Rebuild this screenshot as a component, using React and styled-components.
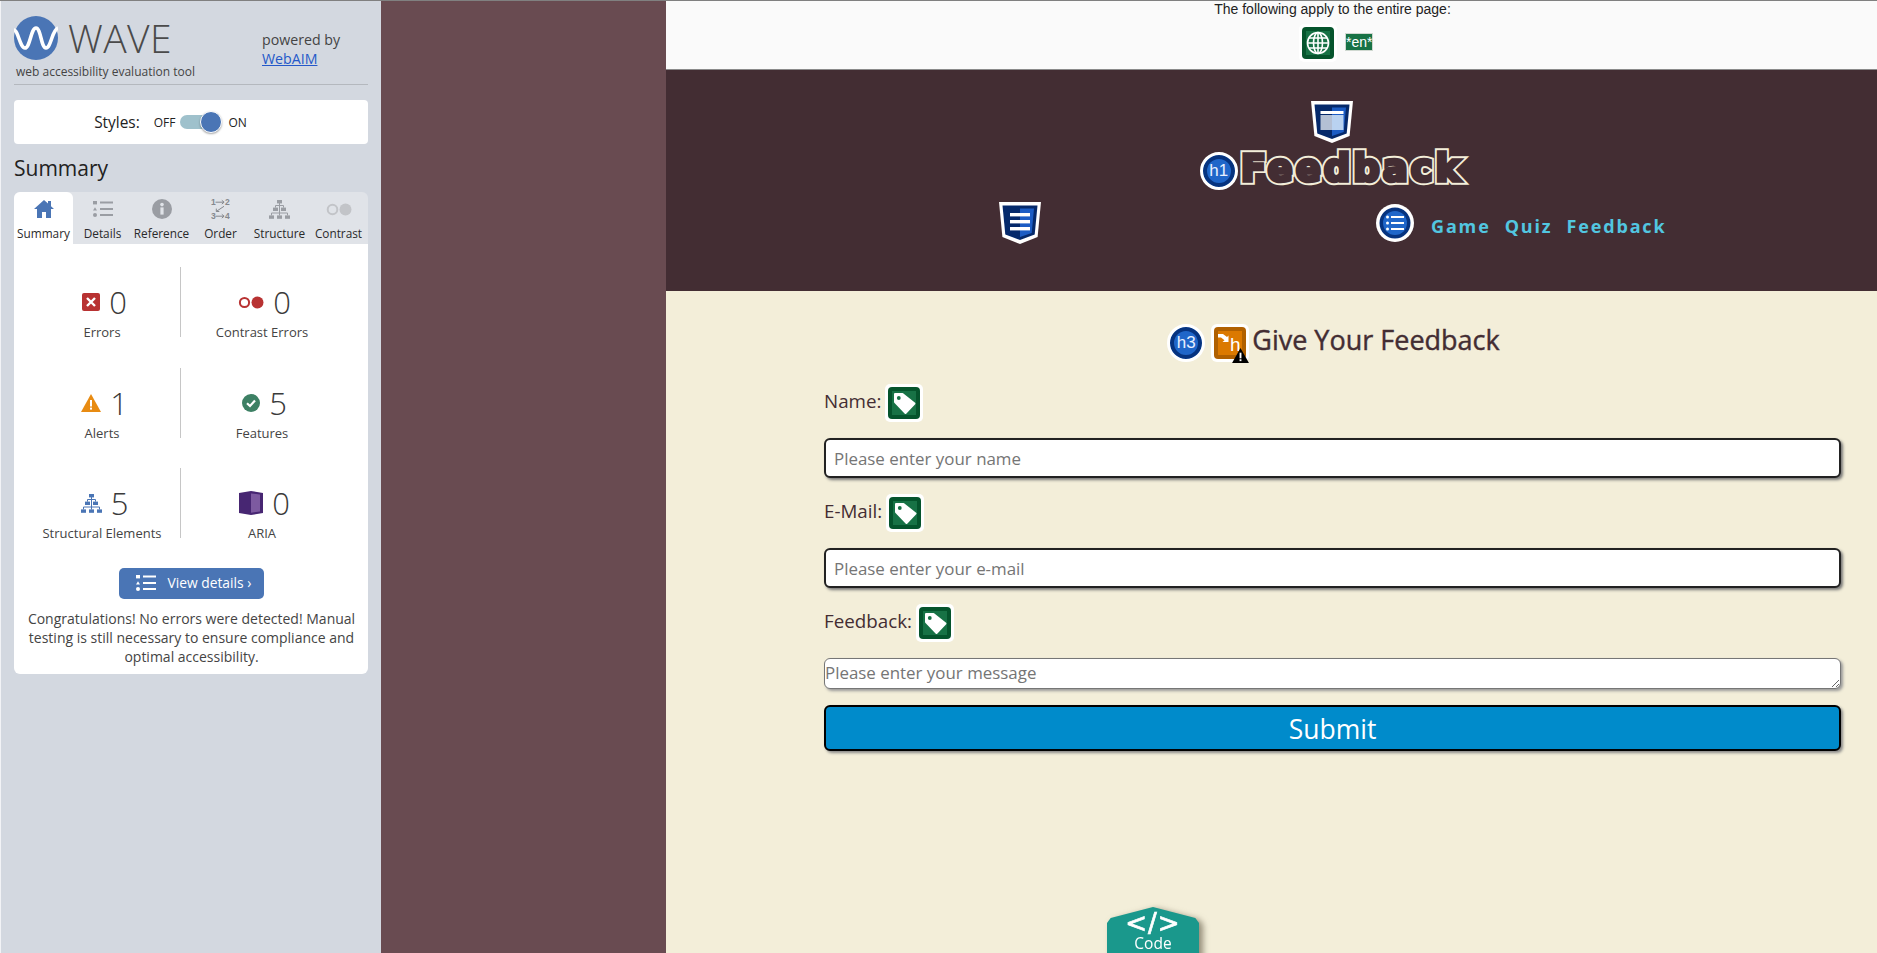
import React from 'react';
import styled, { createGlobalStyle } from 'styled-components';

const Global = createGlobalStyle`
  html, body { margin: 0; padding: 0; overflow: hidden; height: 953px; background: #f3eed9; }
  * { box-sizing: border-box; }
`;

const Shell = styled.div`
  display: grid;
  grid-template-columns: 381px 285px 1fr;
  height: 953px;
  width: 1877px;
  overflow: hidden;
  border-top: 1px solid #808080;
  position: relative;
`;

/* ---------- sidebar ---------- */
const Sidebar = styled.aside`
  background: #d3d8e0;
  border-left: 1px solid #f2f3f6;
  padding: 0 13px;
  font-family: "Open Sans", sans-serif;
  color: #333;
`;
const Brand = styled.header`
  height: 84px;
  border-bottom: 1px solid #b4b8be;
  display: flex;
  justify-content: space-between;
  padding-right: 14px;
`;
const LogoBlock = styled.div`
  padding-top: 15px;
`;
const LogoRow = styled.div`
  display: flex;
  align-items: center;
  gap: 10px;
  height: 44px;
`;
const WaveWord = styled.span`
  font-family: "Open Sans", sans-serif;
  font-weight: 300;
  font-size: 39px;
  letter-spacing: 0.4px;
  line-height: 44px;
  color: #4a4a4a;
`;
const Tagline = styled.div`
  font-size: 12px;
  line-height: 17px;
  margin: 3px 0 0 2px;
  color: #444;
`;
const Powered = styled.div`
  padding-top: 29px;
  width: 92px;
  font-size: 14.2px;
  line-height: 19px;
  color: #444;
`;
const PoweredLink = styled.a`
  color: #2458c9;
  text-decoration: underline;
  display: block;
`;
const StylesCard = styled.div`
  margin-top: 15px;
  height: 44px;
  background: #fff;
  border-radius: 4px;
  display: flex;
  align-items: center;
  justify-content: center;
  padding-right: 41px;
`;
const StylesLabel = styled.span`
  font-size: 15.4px;
  color: #222;
  margin-right: 14px;
`;
const ToggleText = styled.span`
  font-size: 12px;
  color: #222;
`;
const Track = styled.span`
  position: relative;
  display: block;
  width: 37px;
  height: 14px;
  margin: 0 11px 0 5px;
  background: #9fc1cc;
  border-radius: 7px;
`;
const Knob = styled.span`
  position: absolute;
  left: 20px;
  top: -4px;
  width: 22px;
  height: 22px;
  border-radius: 50%;
  background: #4a75b5;
  border: 1px solid #fff;
  box-shadow: 0 1px 2px rgba(0,0,0,.35);
`;
const SectionTitle = styled.h2`
  font-weight: 400;
  font-size: 21px;
  line-height: 28px;
  margin: 10px 0 10px;
  color: #222;
`;
const Tabs = styled.nav`
  display: grid;
  grid-template-columns: repeat(6, 59px);
  background: #e0e3e8;
  border-radius: 6px 6px 0 0;
  height: 52px;
`;
const Tab = styled.div`
  display: flex;
  flex-direction: column;
  align-items: center;
  padding-top: 6px;
  background: ${p => (p.$active ? '#fff' : 'transparent')};
  border-radius: 6px 6px 0 0;
  font-size: 11.8px;
  line-height: 16px;
  color: #2a2a2a;
  white-space: nowrap;
`;
const TabIcon = styled.span`
  height: 22px;
  margin-bottom: 5px;
  display: flex;
  align-items: center;
`;
const Panel = styled.section`
  background: #fff;
  border-radius: 0 0 6px 6px;
  height: 430px;
  padding: 23px 25px 0 10px;
`;
const StatGrid = styled.div`
  display: grid;
  grid-template-columns: 157px 162px;
  grid-auto-rows: 70px;
  row-gap: 30.5px;
`;
const Stat = styled.div`
  display: flex;
  flex-direction: column;
  align-items: center;
  border-right: ${p => (p.$divider ? '1px solid #c6c6c6' : 'none')};
  padding-top: 18px;
`;
const StatTop = styled.div`
  display: flex;
  align-items: center;
  gap: 9px;
  height: 34px;
  margin-left: 5px;
`;
const StatNum = styled.span`
  font-size: 31px;
  font-weight: 300;
  line-height: 34px;
  color: #3a3a3a;
`;
const StatLabel = styled.span`
  font-size: 13px;
  line-height: 17px;
  margin-top: 5px;
  color: #444;
  white-space: nowrap;
`;
const DetailsRow = styled.div`
  display: flex;
  justify-content: center;
  margin: 30px 0 0 15px;
`;
const DetailsBtn = styled.button`
  width: 145px;
  height: 31px;
  background: #4a75b5;
  border: none;
  border-radius: 5px;
  color: #fff;
  font-family: "Open Sans", sans-serif;
  font-size: 13.8px;
  line-height: 29px;
  display: flex;
  align-items: flex-start;
  gap: 12px;
  padding: 0 0 0 17px;
  & > svg { margin-top: 7px; }
`;
const Congrats = styled.p`
  margin: 10px -15px 0 0;
  padding: 0 0 0 1px;
  text-align: center;
  font-size: 14px;
  line-height: 19px;
  color: #444;
`;

/* ---------- brown gutter ---------- */
const Gutter = styled.div`
  background: #694b51;
`;

/* ---------- page ---------- */
const Page = styled.main`
  display: flex;
  flex-direction: column;
  background: #f3eed9;
  font-family: "Open Sans", sans-serif;
  color: #432d33;
`;
const NoticeBar = styled.div`
  height: 69px;
  background: #fafafa;
  border-bottom: 1px solid #8a8a8a;
  padding-left: 122px;
  display: flex;
  flex-direction: column;
  align-items: center;
  font-family: "Liberation Sans", sans-serif;
  font-size: 14px;
  line-height: 16px;
  color: #222;
`;
const NoticeIcons = styled.div`
  display: flex;
  align-items: center;
  gap: 8px;
  margin: 7px 0 0 7px;
`;
const LangTag = styled.span`
  display: block;
  width: 28px;
  height: 18px;
  line-height: 17px;
  text-align: center;
  background: #177245;
  border: 1px solid #cfd8d0;
  color: #fff;
  font-size: 14px;
  margin-top: -2px;
`;
const Hero = styled.header`
  height: 221px;
  background: #432d33;
  padding: 31px 0 0 120px;
  display: flex;
  flex-direction: column;
  align-items: center;
`;
const TitleRow = styled.div`
  display: flex;
  align-items: center;
  gap: 3px;
  margin: 8px 0 0 0;
  height: 40px;
`;
const LogoTitle = styled.h1`
  position: relative;
  margin: -4px 0 0 0;
  font-family: "DejaVu Sans", sans-serif;
  font-weight: 700;
  font-size: 37px;
  line-height: 40px;
  letter-spacing: 3px;
  color: #f3eed9;
  -webkit-text-stroke: 7.4px #f3eed9;
  &::after {
    content: "Feedback";
    position: absolute;
    left: 0;
    top: 0;
    color: #432d33;
    -webkit-text-stroke: 3.6px #432d33;
  }
`;
const HeroNav = styled.div`
  align-self: stretch;
  display: flex;
  align-items: center;
  margin-top: 11px;
  padding-left: 213px;
`;
const NavSpacer = styled.span`
  width: 335px;
`;
const NavLinks = styled.nav`
  display: flex;
  gap: 14px;
  margin: 6px 0 0 17px;
`;
const NavLink = styled.a`
  font-family: "Open Sans", sans-serif;
  font-weight: 700;
  font-size: 18px;
  line-height: 24px;
  letter-spacing: 1.85px;
  color: #52c6e0;
`;
const RoundBadge = styled.span`
  flex: none;
  display: flex;
  align-items: center;
  justify-content: center;
  width: ${p => p.$size || 38}px;
  height: ${p => p.$size || 38}px;
  border-radius: 50%;
  background: #1f66c9;
  border: 3px solid #fff;
  box-shadow: inset 0 0 0 4px #06337f;
  color: #e8f0ff;
  font-family: "Liberation Sans", sans-serif;
  font-size: 17px;
`;
const Content = styled.div`
  flex: 1;
  padding: 33px 36px 0 158px;
  position: relative;
`;
const SectionHead = styled.div`
  display: flex;
  align-items: center;
  justify-content: center;
  height: 38px;
  padding-left: 2px;
`;
const HeadTitle = styled.h3`
  margin: -6px 0 0 3px;
  font-size: 27px;
  font-weight: 400;
  line-height: 38px;
  color: #432d33;
  -webkit-text-stroke: 0.4px #432d33;
`;
const OrangeWrap = styled.span`
  position: relative;
  display: block;
  width: 38px;
  height: 38px;
  margin-left: 6px;
`;
const WarnMark = styled.span`
  position: absolute;
  right: 0;
  bottom: -1px;
  display: block;
  line-height: 0;
`;
const FieldLabel = styled.label`
  display: flex;
  align-items: flex-start;
  gap: 4px;
  height: 38px;
  margin-top: ${p => p.$top}px;
  font-size: 18.8px;
  line-height: 35px;
  color: #432d33;
`;
const TextField = styled.input`
  display: block;
  width: 100%;
  height: 40px;
  margin-top: 16px;
  padding: 0 8px;
  background: #fff;
  border: 2px solid #222;
  border-radius: 6px;
  box-shadow: 2px 2px 3px #777;
  font-family: "Open Sans", sans-serif;
  font-size: 16.9px;
  outline: none;
  &::placeholder { color: #757575; opacity: 1; }
`;
const MessageField = styled.textarea`
  display: block;
  width: 100%;
  height: 31px;
  margin-top: 16px;
  padding: 2px 0 0;
  background: #fff;
  border: 1px solid #767676;
  border-radius: 6px;
  box-shadow: 2px 2px 3px #999;
  font-family: "Open Sans", sans-serif;
  font-size: 16.9px;
  line-height: 24px;
  outline: none;
  &::placeholder { color: #757575; opacity: 1; }
`;
const Submit = styled.button`
  display: block;
  width: 100%;
  height: 46px;
  margin-top: 16px;
  padding-top: 2px;
  background: #008bcb;
  border: 2px solid #000;
  border-radius: 6px;
  box-shadow: 2px 2px 3px #888;
  color: #fff;
  font-family: "Open Sans", sans-serif;
  font-size: 26.5px;
`;
const CodeTab = styled.div`
  position: absolute;
  left: 441px;
  top: 616px;
  width: 92px;
  height: 60px;
  filter: drop-shadow(4px 2px 3px rgba(70,60,40,.55));
`;
const CodeShape = styled.div`
  width: 92px;
  height: 60px;
  background: #1a988c;
  clip-path: polygon(50% 0, 96% 11px, 100% 16px, 100% 100%, 0 100%, 0 16px, 4% 11px);
  display: flex;
  flex-direction: column;
  align-items: center;
  color: #fff;
`;
const CodeGlyph = styled.span`
  font-family: "DejaVu Sans", sans-serif;
  font-size: 26px;
  line-height: 26px;
  margin-top: 3px;
  letter-spacing: 1px;
  -webkit-text-stroke: 0.7px #fff;
`;
const CodeLabel = styled.span`
  font-size: 15.5px;
  line-height: 18px;
  margin-top: -2px;
`;

/* ---------- drawings ---------- */
const WaveLogo = () => (
  <svg width="44" height="44" viewBox="0 0 44 44">
    <circle cx="22" cy="22" r="22" fill="#4a75b5" />
    <path d="M0 14C4 14 6 32 11 32S17 12 22 12 27 32 32 32 38 14 44 12" fill="none" stroke="#fff" strokeWidth="3.6" />
  </svg>
);
const Home = () => (
  <svg width="20" height="18" viewBox="0 0 20 18"><path d="M10 0 0 9h3v9h5v-6h4v6h5V9h3l-3-2.7V1h-3v2.6z" fill="#4a75b5" /></svg>
);
const ListGlyph = ({ c = '#9a9da3', w = 20, h = 16 }) => (
  <svg width={w} height={h} viewBox="0 0 20 16" fill={c}>
    <rect x="0" y="0" width="4" height="3.4" /><path d="M2 6.2 4 9.6H0z" /><circle cx="2" cy="14" r="2" />
    <rect x="7" y=".5" width="13" height="2" /><rect x="7" y="7" width="13" height="2" /><rect x="7" y="13" width="13" height="2" />
  </svg>
);
const InfoIcon = () => (
  <svg width="20" height="20" viewBox="0 0 20 20"><circle cx="10" cy="10" r="10" fill="#9a9da3" /><rect x="8.4" y="8.4" width="3.2" height="7.2" fill="#e0e3e8" /><circle cx="10" cy="5.6" r="1.8" fill="#e0e3e8" /></svg>
);
const OrderIcon = () => (
  <svg width="19" height="22" viewBox="0 0 19 22">
    <g fill="#85888d" fontFamily="Liberation Sans, sans-serif" fontSize="8.500" fontWeight="700">
      <text x="0" y="7">1</text><text x="14" y="7">2</text>
      <text x="0" y="21">3</text><text x="14" y="21">4</text>
    </g>
    <path d="M4.500 4.200h8.500M10.800 2.300l2.300 1.900-2.300 1.900M13 8.300 5.500 13.300M5.300 10.600v2.900h3M4.500 18.200h8.500M10.800 16.300l2.300 1.900-2.300 1.900" fill="none" stroke="#85888d" strokeWidth="1" />
  </svg>
);
const StructureIcon = ({ c = '#9a9da3', w = 21, h = 19 }) => (
  <svg width={w} height={h} viewBox="0 0 21 19" fill={c}>
    <rect x="8" y="0" width="5" height="3.400" /><rect x="4" y="7.600" width="5" height="3.400" /><rect x="12" y="7.600" width="5" height="3.400" />
    <rect x="0" y="15.400" width="5" height="3.400" /><rect x="8" y="15.400" width="5" height="3.400" /><rect x="16" y="15.400" width="5" height="3.400" />
    <path d="M10.500 3v2.500M6.500 7.600V5.500h8v2.100M10.500 5.500v10M2.500 15.400V13h16v2.400" fill="none" stroke={c} strokeWidth="1" />
  </svg>
);
const ContrastIcon = () => (
  <svg width="26" height="13" viewBox="0 0 26 13"><circle cx="6.5" cy="6.5" r="4.8" fill="none" stroke="#c2c4c8" strokeWidth="2" /><circle cx="19.5" cy="6.5" r="6" fill="#c2c4c8" /></svg>
);
const ErrorIcon = () => (
  <svg width="18" height="18" viewBox="0 0 18 18"><rect width="18" height="18" rx="2" fill="#b83232" /><path d="M5 5l8 8M13 5l-8 8" stroke="#fff" strokeWidth="2.4" /></svg>
);
const ContrastError = () => (
  <svg width="26" height="13" viewBox="0 0 26 13"><circle cx="6.5" cy="6.5" r="4.6" fill="none" stroke="#b83232" strokeWidth="2" /><circle cx="19.5" cy="6.5" r="6" fill="#b83232" /></svg>
);
const AlertIcon = () => (
  <svg width="20" height="18" viewBox="0 0 20 18"><path d="M10 0 20 18H0z" fill="#e88b12" /><rect x="9" y="6" width="2" height="6.5" fill="#fff" /><rect x="9" y="13.6" width="2" height="2" fill="#fff" /></svg>
);
const CheckIcon = () => (
  <svg width="18" height="18" viewBox="0 0 18 18"><circle cx="9" cy="9" r="9" fill="#3d8064" /><path d="M5 9.2 8 12l5-5.4" fill="none" stroke="#fff" strokeWidth="2.2" /></svg>
);
const AriaIcon = () => (
  <svg width="24" height="24" viewBox="0 0 24 24"><path d="M0 2 12 0l12 2v20l-12 2-12-2z" fill="#472672" /><path d="M12 2.5 21 3.6v16.8l-9 1.3z" fill="#7d5aa0" /></svg>
);
const Shield = ({ region }) => (
  <svg width="42" height="42" viewBox="0 0 42 42">
    <path d="M0 0h42l-3.4 35L21 42 3.4 35z" fill="#fff" />
    <path d="M3.5 3.5h35l-2.8 29L21 38 6.300 32.500z" fill="#05296b" />
    <path d="M21 6.500h14l-2.300 24.500-11.700 4z" fill="#1c5cc4" />
    {region ? (
      <>
        <rect x="9.500" y="10" width="23" height="3" fill="#fff" />
        <rect x="9.500" y="14" width="11.500" height="15" fill="#b4c0d4" />
        <rect x="21" y="14" width="11.500" height="15" fill="#b9d2f0" />
      </>
    ) : (
      <>
        <rect x="11" y="11" width="20" height="3.400" fill="#fff" />
        <rect x="11" y="18" width="20" height="3.400" fill="#fff" />
        <rect x="11" y="25" width="20" height="3.400" fill="#fff" />
      </>
    )}
  </svg>
);
const ListBadgeIcon = () => (
  <svg width="38" height="38" viewBox="0 0 38 38">
    <circle cx="19" cy="19" r="19" fill="#fff" />
    <circle cx="19" cy="19" r="15.500" fill="#06337f" />
    <circle cx="19" cy="19" r="12" fill="#1f66c9" />
    <g fill="#fff">
      <circle cx="11.500" cy="13" r="1.500" /><circle cx="11.500" cy="19" r="1.500" /><circle cx="11.500" cy="25" r="1.500" />
      <rect x="15" y="12" width="13" height="2" /><rect x="15" y="18" width="13" height="2" /><rect x="15" y="24" width="13" height="2" />
    </g>
  </svg>
);
const GreenTile = ({ children }) => (
  <svg width="38" height="38" viewBox="0 0 38 38" style={{ flex: 'none', display: 'block' }}>
    <rect width="38" height="38" rx="5" fill="#fff" />
    <rect x="3" y="3" width="32" height="32" rx="4" fill="#05542c" />
    <rect x="7" y="7" width="24" height="24" fill="#177245" />
    {children}
  </svg>
);
const TagIcon = () => (
  <GreenTile>
    <path d="M10 10h7.500L29.500 19.500 20.500 29 10 18z" fill="#fff" stroke="#fff" strokeLinejoin="round" strokeWidth="2" />
    <circle cx="13.800" cy="14" r="1.900" fill="#177245" />
  </GreenTile>
);
const GlobeIcon = () => (
  <GreenTile>
    <g fill="none" stroke="#fff" strokeWidth="1.600">
      <circle cx="19" cy="19" r="10.500" /><ellipse cx="19" cy="19" rx="4.500" ry="10.500" />
      <path d="M19 8.500v21M8.500 19h21M10 14h18M10 24h18" />
    </g>
  </GreenTile>
);
const OrangeHeading = () => (
  <svg width="38" height="38" viewBox="0 0 38 38" style={{ display: 'block' }}>
    <rect width="38" height="38" rx="6" fill="#fff" />
    <rect x="3" y="3" width="32" height="32" rx="4" fill="#b06000" />
    <rect x="7" y="7" width="24" height="24" fill="#db7900" />
    <path d="M7 10h5l4 3 1.500-1.500V18h-6l2-1.800L10 13.500H7z" fill="#fff" />
    <text x="19" y="27" fontFamily="Liberation Sans, sans-serif" fontSize="19" fill="#fff">h</text>
  </svg>
);
const WarnTriangle = () => (
  <svg width="17" height="15" viewBox="0 0 18 16"><path d="M9 0l9 16H0z" fill="#000" /><rect x="8" y="5" width="2" height="6" fill="#fff" /><rect x="8" y="12" width="2" height="2" fill="#fff" /></svg>
);

const tabs = [
  ['Summary', <Home key="i" />, true],
  ['Details', <ListGlyph key="i" />],
  ['Reference', <InfoIcon key="i" />],
  ['Order', <OrderIcon key="i" />],
  ['Structure', <StructureIcon key="i" />],
  ['Contrast', <ContrastIcon key="i" />],
];
const stats = [
  ['Errors', 0, <ErrorIcon key="i" />],
  ['Contrast Errors', 0, <ContrastError key="i" />],
  ['Alerts', 1, <AlertIcon key="i" />],
  ['Features', 5, <CheckIcon key="i" />],
  ['Structural Elements', 5, <StructureIcon key="i" c="#4a75b5" />],
  ['ARIA', 0, <AriaIcon key="i" />],
];

export default function App() {
  return (
    <>
      <Global />
      <Shell>
        <Sidebar>
          <Brand>
            <LogoBlock>
              <LogoRow><WaveLogo /><WaveWord>WAVE</WaveWord></LogoRow>
              <Tagline>web accessibility evaluation tool</Tagline>
            </LogoBlock>
            <Powered>powered by<PoweredLink href="#">WebAIM</PoweredLink></Powered>
          </Brand>
          <StylesCard>
            <StylesLabel>Styles:</StylesLabel>
            <ToggleText>OFF</ToggleText>
            <Track><Knob /></Track>
            <ToggleText>ON</ToggleText>
          </StylesCard>
          <SectionTitle>Summary</SectionTitle>
          <Tabs>
            {tabs.map(([label, icon, active]) => (
              <Tab key={label} $active={active}>
                <TabIcon>{icon}</TabIcon>
                {label}
              </Tab>
            ))}
          </Tabs>
          <Panel>
            <StatGrid>
              {stats.map(([label, n, icon], i) => (
                <Stat key={label} $divider={i % 2 === 0}>
                  <StatTop>{icon}<StatNum>{n}</StatNum></StatTop>
                  <StatLabel>{label}</StatLabel>
                </Stat>
              ))}
            </StatGrid>
            <DetailsRow>
              <DetailsBtn><ListGlyph c="#fff" />View details ›</DetailsBtn>
            </DetailsRow>
            <Congrats>Congratulations! No errors were detected! Manual testing is still necessary to ensure compliance and optimal accessibility.</Congrats>
          </Panel>
        </Sidebar>
        <Gutter />
        <Page>
          <NoticeBar>
            The following apply to the entire page:
            <NoticeIcons><GlobeIcon /><LangTag>*en*</LangTag></NoticeIcons>
          </NoticeBar>
          <Hero>
            <Shield region />
            <TitleRow>
              <RoundBadge>h1</RoundBadge>
              <LogoTitle>Feedback</LogoTitle>
            </TitleRow>
            <HeroNav>
              <Shield />
              <NavSpacer />
              <ListBadgeIcon />
              <NavLinks>
                <NavLink>Game</NavLink>
                <NavLink>Quiz</NavLink>
                <NavLink>Feedback</NavLink>
              </NavLinks>
            </HeroNav>
          </Hero>
          <Content>
            <SectionHead>
              <RoundBadge>h3</RoundBadge>
              <OrangeWrap><OrangeHeading /><WarnMark><WarnTriangle /></WarnMark></OrangeWrap>
              <HeadTitle>Give Your Feedback</HeadTitle>
            </SectionHead>
            <FieldLabel $top={22}>Name: <TagIcon /></FieldLabel>
            <TextField placeholder="Please enter your name" />
            <FieldLabel $top={16}>E-Mail: <TagIcon /></FieldLabel>
            <TextField placeholder="Please enter your e-mail" />
            <FieldLabel $top={16}>Feedback: <TagIcon /></FieldLabel>
            <MessageField placeholder="Please enter your message" />
            <Submit>Submit</Submit>
            <CodeTab>
              <CodeShape>
                <CodeGlyph>&lt;/&gt;</CodeGlyph>
                <CodeLabel>Code</CodeLabel>
              </CodeShape>
            </CodeTab>
          </Content>
        </Page>
      </Shell>
    </>
  );
}
